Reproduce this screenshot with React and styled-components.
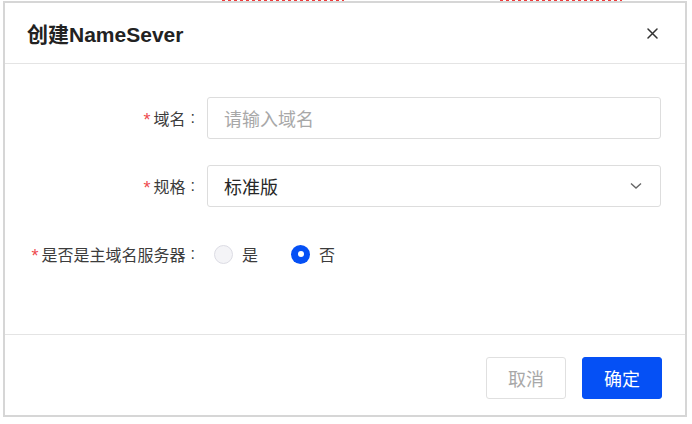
import styled, { createGlobalStyle } from "styled-components";

const GlobalStyle = createGlobalStyle`
  html, body {
    margin: 0;
    padding: 0;
    background: #ffffff;
  }
  body {
    font-family: "Liberation Sans", "Noto Sans CJK SC", sans-serif;
    color: #333333;
  }
  * {
    box-sizing: border-box;
  }
`;

const Page = styled.div`
  width: 692px;
  height: 424px;
  display: flex;
  flex-direction: column;
`;

const Marks = styled.div`
  display: flex;
  height: 1px;
  padding-left: 222px;
  gap: 156px;
`;

const Mark = styled.span`
  width: ${(p) => p.w}px;
  height: 1px;
  background: repeating-linear-gradient(
    to right,
    #f03a3a 0 3px,
    transparent 3px 6px
  );
`;

const Dialog = styled.div`
  margin-left: 3px;
  width: 684px;
  height: 416px;
  border: 2px solid #d6d6d6;
  display: flex;
  flex-direction: column;
`;

const Header = styled.div`
  height: 61px;
  flex-shrink: 0;
  display: flex;
  align-items: center;
  justify-content: space-between;
  padding: 0 27px 0 22px;
  border-bottom: 1px solid #e4e4e4;
`;

const Title = styled.h2`
  margin: 0;
  font-size: 21px;
  font-weight: 700;
  color: #222222;
`;

const Close = styled.button`
  border: 0;
  background: none;
  padding: 0;
  width: 12px;
  height: 12px;
  display: flex;
  align-items: center;
  justify-content: center;
  cursor: pointer;
`;

const Body = styled.div`
  flex: 1;
  padding: 33px 24px 0 0;
  display: flex;
  flex-direction: column;
  gap: 26px;
`;

const Row = styled.div`
  display: grid;
  grid-template-columns: 190px 1fr;
  column-gap: 12px;
  align-items: center;
  height: 42px;
`;

const Label = styled.label`
  display: flex;
  justify-content: flex-end;
  align-items: center;
  font-size: 16px;
  color: #3c3c3c;
  white-space: nowrap;
`;

const Star = styled.span`
  color: #ee4a4f;
  font-size: 18px;
  margin-right: 3px;
  position: relative;
  top: 2px;
`;

const Colon = styled.span`
  margin-left: 5px;
`;

const Field = styled.div`
  height: 42px;
  border: 1px solid #dddddd;
  border-radius: 3px;
  display: flex;
  align-items: center;
  justify-content: space-between;
  padding: 0 18px 0 16px;
  font-size: 18px;
  color: ${(p) => (p.placeholder ? "#a8a8a8" : "#262626")};
`;

const RadioGroup = styled.div`
  display: flex;
  align-items: center;
  gap: 33px;
  padding-left: 7px;
`;

const RadioItem = styled.label`
  display: flex;
  align-items: center;
  gap: 9px;
  font-size: 16px;
  color: #3c3c3c;
`;

const Dot = styled.span`
  width: 19px;
  height: 19px;
  border-radius: 50%;
  border: ${(p) => (p.checked ? "0" : "1.5px solid #dcdce4")};
  background: ${(p) => (p.checked ? "#0550f5" : "#f4f4f7")};
  display: flex;
  align-items: center;
  justify-content: center;
  &::after {
    content: "";
    width: 6px;
    height: 6px;
    border-radius: 50%;
    background: #ffffff;
    display: ${(p) => (p.checked ? "block" : "none")};
  }
`;

const Footer = styled.div`
  height: 81px;
  flex-shrink: 0;
  border-top: 1px solid #e4e4e4;
  display: flex;
  justify-content: flex-end;
  align-items: flex-start;
  gap: 16px;
  padding: 22px 23px 0 0;
`;

const Button = styled.button`
  width: 80px;
  height: 42px;
  border-radius: 3px;
  font-family: inherit;
  font-size: 18px;
  cursor: pointer;
  border: 1px solid ${(p) => (p.primary ? "#0550f5" : "#e0e0e0")};
  background: ${(p) => (p.primary ? "#0550f5" : "#ffffff")};
  color: ${(p) => (p.primary ? "#ffffff" : "#a8a8a8")};
`;

export default function App() {
  return (
    <Page>
      <GlobalStyle />
      <Marks>
        <Mark w={122} />
        <Mark w={122} />
      </Marks>
      <Dialog>
        <Header>
          <Title>创建NameSever</Title>
          <Close aria-label="close">
            <svg width="11" height="11" viewBox="0 0 11 11">
              <path
                d="M1 1 L10 10 M10 1 L1 10"
                stroke="#333"
                strokeWidth="1.5"
                strokeLinecap="round"
              />
            </svg>
          </Close>
        </Header>
        <Body>
          <Row>
            <Label>
              <Star>*</Star>域名<Colon>:</Colon>
            </Label>
            <Field placeholder>请输入域名</Field>
          </Row>
          <Row>
            <Label>
              <Star>*</Star>规格<Colon>:</Colon>
            </Label>
            <Field>
              标准版
              <svg width="12" height="8" viewBox="0 0 12 8">
                <path
                  d="M1 1.5 L6 6 L11 1.5"
                  fill="none"
                  stroke="#666"
                  strokeWidth="1.4"
                />
              </svg>
            </Field>
          </Row>
          <Row>
            <Label>
              <Star>*</Star>是否是主域名服务器<Colon>:</Colon>
            </Label>
            <RadioGroup>
              <RadioItem>
                <Dot />是
              </RadioItem>
              <RadioItem>
                <Dot checked />否
              </RadioItem>
            </RadioGroup>
          </Row>
        </Body>
        <Footer>
          <Button>取消</Button>
          <Button primary>确定</Button>
        </Footer>
      </Dialog>
    </Page>
  );
}
